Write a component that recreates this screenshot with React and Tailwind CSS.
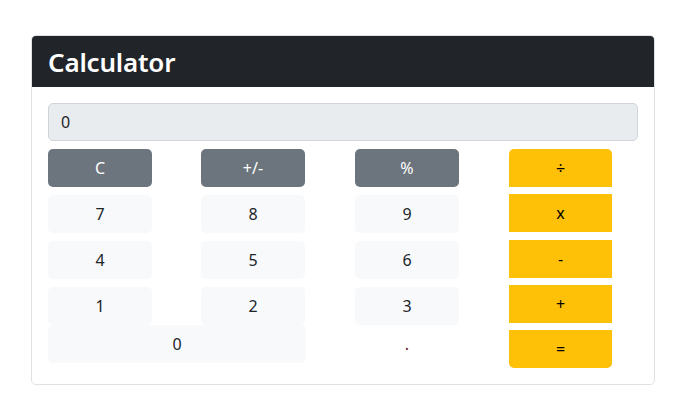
export default function App() {
  const num = "w-[104px] h-[38px] rounded-[5px] bg-[#f8f9fa] text-[#212529] text-[16px] flex items-center justify-center";
  const gray = "w-[104px] h-[38px] rounded-[5px] bg-[#6c757d] text-white text-[16px] flex items-center justify-center";
  const yellow = "h-[38px] bg-[#ffc107] flex items-center justify-center text-[16px] text-black";
  const Row = ({ children, className = "" }) => (
    <div className={"grid grid-cols-[153px_154px_154px] " + className}>{children}</div>
  );
  return (
    <div className="w-[682px] h-[412px] bg-white pt-[35px] pl-[31px]" style={{ fontFamily: '"Noto Sans", "Open Sans", sans-serif' }}>
      <div className="w-[624px] h-[350px] border border-[#dee2e6] rounded-[5px] overflow-hidden">
        <div className="bg-[#212529] h-[51px] px-[16px] flex items-center">
          <h2 className="text-white font-semibold text-[26px] leading-none tracking-[-0.2px]">Calculator</h2>
        </div>
        <div className="px-[16px] pt-[16px]">
          <div className="h-[38px] bg-[#e9ecef] border border-[#ced4da] rounded-[5px] flex items-center pl-[12px] text-[16px] text-[#212529]">0</div>
          <div className="flex mt-[8px]">
            <div className="flex flex-col">
              <Row className="mb-[8px]">
                <div className={gray}>C</div>
                <div className={gray}>+/-</div>
                <div className={gray}>%</div>
              </Row>
              <Row className="mb-[8px]">
                <div className={num}>7</div>
                <div className={num}>8</div>
                <div className={num}>9</div>
              </Row>
              <Row className="mb-[8px]">
                <div className={num}>4</div>
                <div className={num}>5</div>
                <div className={num}>6</div>
              </Row>
              <Row>
                <div className={num}>1</div>
                <div className={num}>2</div>
                <div className={num}>3</div>
              </Row>
              <Row>
                <div className="col-span-2 w-[258px] h-[38px] rounded-[5px] bg-[#f8f9fa] text-[#212529] text-[16px] flex items-center justify-center">0</div>
                <div className="w-[104px] h-[38px] text-[#6b1f2a] text-[16px] flex items-center justify-center">.</div>
              </Row>
            </div>
            <div className="flex flex-col w-[103px] gap-[7.3px]">
              <div className={yellow + " rounded-t-[5px]"}>÷</div>
              <div className={yellow}>x</div>
              <div className={yellow}>-</div>
              <div className={yellow}>+</div>
              <div className={yellow + " rounded-b-[5px]"}>=</div>
            </div>
          </div>
        </div>
      </div>
    </div>
  );
}
